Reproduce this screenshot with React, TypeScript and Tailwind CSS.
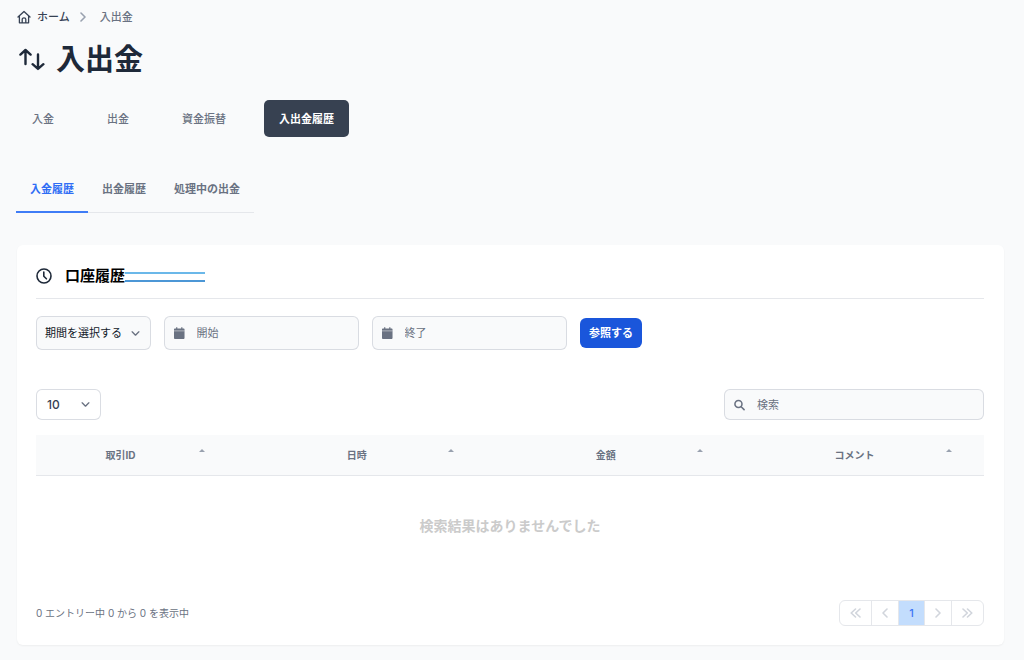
import { useState } from "react";
import type { ReactNode } from "react";

const tabs = ["入金", "出金", "資金振替", "入出金履歴"];
const historyTabs = ["入金履歴", "出金履歴", "処理中の出金"];
const columns = ["取引ID", "日時", "金額", "コメント"];

function HomeIcon() {
  return (
    <svg className="size-[14px]" viewBox="0 0 14 14" fill="none" stroke="currentColor" strokeWidth="1.3" strokeLinejoin="round" strokeLinecap="round" aria-hidden="true">
      <path d="M1 7 7 1.400l6 5.600M2.400 5.900v6.900h9.200V5.900M5.200 12.600V9.300c0-1 .8-1.500 1.800-1.500s1.800.5 1.800 1.500v3.300" />
    </svg>
  );
}

function TransferIcon() {
  return (
    <svg className="h-6 w-[26px]" viewBox="0 0 26 24" fill="none" stroke="currentColor" strokeWidth="2.4" strokeLinecap="round" strokeLinejoin="round" aria-hidden="true">
      <path d="M6.500 16V2M1.400 6.600 6.500 2l5.100 4.600M19 6.500v14.300M13.600 16.200l5.400 4.700 5.400-4.700" />
    </svg>
  );
}

function ClockIcon() {
  return (
    <svg className="size-4" viewBox="0 0 16 16" fill="none" stroke="currentColor" strokeWidth="1.6" strokeLinecap="round" strokeLinejoin="round" aria-hidden="true">
      <circle cx="8" cy="8" r="7" />
      <path d="M7.800 4v4.200l2.600 2.600" />
    </svg>
  );
}

function CalendarIcon() {
  return (
    <svg className="h-[14px] w-3" viewBox="0 0 12 14" fill="currentColor" aria-hidden="true">
      <path d="M2.400.4h1.400v1.400h4.400V.4h1.400v1.400h1.200c.7 0 1.200.5 1.200 1.100v1.300H0V2.900c0-.6.5-1.100 1.200-1.100h1.200z" />
      <path d="M0 5h12v7.600c0 .6-.5 1.100-1.200 1.100H1.200c-.7 0-1.200-.5-1.200-1.100z" />
      <path d="M0 4h12v1.200H0z" opacity=".6" />
    </svg>
  );
}

function SearchIcon() {
  return (
    <svg className="size-3" viewBox="0 0 12 12" fill="none" stroke="currentColor" strokeWidth="1.7" strokeLinecap="round" aria-hidden="true">
      <circle cx="4.900" cy="4.900" r="3.900" />
      <path d="m7.900 7.900 3.200 3.200" />
    </svg>
  );
}

function Chevron({ className, d = "m1 1 4 4 4-4", box = "0 0 10 6" }: { className: string; d?: string; box?: string }) {
  return (
    <svg className={className} viewBox={box} fill="none" stroke="currentColor" strokeWidth="1.6" strokeLinecap="round" strokeLinejoin="round" aria-hidden="true">
      <path d={d} />
    </svg>
  );
}

function Field({ label, icon, className, height }: { label: string; icon: ReactNode; className: string; height: string }) {
  return (
    <label className={`flex items-center gap-3 rounded-md border border-gray-300/80 bg-gray-50 pl-[9px] text-gray-500 ${height} ${className}`}>
      {icon}
      <input type="text" aria-label={label} placeholder={label} className="w-full min-w-0 bg-transparent text-[11px] outline-none placeholder:text-gray-500" />
    </label>
  );
}

function PageButton({ label, className, children }: { label: string; className: string; children: ReactNode }) {
  return (
    <button type="button" aria-label={label} className={`flex h-full items-center justify-center text-gray-300 ${className}`}>
      {children}
    </button>
  );
}

export default function App() {
  const [tab, setTab] = useState(3);
  const [historyTab, setHistoryTab] = useState(0);

  return (
    <div className="min-h-screen bg-gray-50 pt-2 pr-5 pb-[15px] pl-[17px] font-[Inter,'Noto_Sans_CJK_JP',sans-serif] text-[11px] leading-4 text-gray-500">
      <nav aria-label="パンくずリスト" className="flex h-[18px] items-center font-medium">
        <a href="#" className="flex items-center gap-[6px] text-gray-700">
          <HomeIcon />
          <span>ホーム</span>
        </a>
        <Chevron className="mr-[14px] ml-[10px] h-[10px] w-[6px] text-gray-400" d="m1 1 4 4-4 4" box="0 0 6 10" />
        <span>入出金</span>
      </nav>

      <h1 className="mt-[14px] flex h-10 items-center gap-[11px] pl-[2px] text-[29px] font-bold text-gray-800">
        <TransferIcon />
        入出金
      </h1>

      <div className="mt-5 flex gap-[23px]">
        {tabs.map((name, i) => (
          <button
            key={name}
            type="button"
            onClick={() => setTab(i)}
            className={`h-[37px] rounded-[5px] px-[15px] ${i === tab ? "bg-[#374151] font-bold text-white" : "font-medium"}`}
          >
            {name}
          </button>
        ))}
      </div>

      <div className="mt-[29px] flex">
        <div className="-ml-px flex border-b border-gray-200">
          {historyTabs.map((name, i) => (
            <button
              key={name}
              type="button"
              onClick={() => setHistoryTab(i)}
              className={`-mb-px h-[47px] border-b-2 px-[14px] ${i === historyTab ? "border-[#3f7cf6] font-bold text-[#2f6df5]" : "border-transparent font-bold"}`}
            >
              {name}
            </button>
          ))}
        </div>
      </div>

      <section className="mt-8 rounded-md bg-white pt-[14px] pr-5 pb-[19px] pl-[19px] shadow-xs">
        <div className="flex h-10 items-center border-b border-gray-200 pb-[6px] text-black">
          <span className="text-gray-800">
            <ClockIcon />
          </span>
          <h2 className="ml-[13px] text-[15px] font-bold">口座履歴</h2>
          <span className="mt-[3px] h-[10px] w-20 border-y-2 border-t-[#6bb8e9] border-b-[#4c97d6]" />
        </div>

        <form className="mt-[17px] flex items-center gap-[13px]" onSubmit={(e) => e.preventDefault()}>
          <div className="relative">
            <select aria-label="期間" className="h-[34px] w-[115px] appearance-none rounded-md border border-gray-300/80 bg-gray-50 pl-2 text-[11px] text-gray-900 outline-none">
              <option>期間を選択する</option>
            </select>
            <Chevron className="pointer-events-none absolute top-[15px] right-[11px] h-[5px] w-[9px] text-gray-500" />
          </div>
          <Field label="開始" icon={<CalendarIcon />} height="h-[34px]" className="w-[195px]" />
          <Field label="終了" icon={<CalendarIcon />} height="h-[34px]" className="w-[195px]" />
          <button type="submit" className="h-[30px] rounded-md bg-[#1a56db] px-[9px] font-bold text-white">
            参照する
          </button>
        </form>

        <div className="mt-[39px] flex items-center justify-between">
          <div className="relative">
            <select aria-label="表示件数" className="h-[31px] w-[65px] appearance-none rounded-md border border-gray-300/80 bg-white pl-[10px] text-[12px] font-medium text-gray-700 outline-none">
              <option>10</option>
              <option>25</option>
              <option>50</option>
            </select>
            <Chevron className="pointer-events-none absolute top-[13px] right-[11px] h-[5px] w-[9px] text-gray-500" />
          </div>
          <Field label="検索" icon={<SearchIcon />} height="h-[31px]" className="w-[260px]" />
        </div>

        <table className="mt-[15px] w-full table-fixed">
          <colgroup>
            <col className="w-[26.25%]" />
            <col className="w-[26.25%]" />
            <col className="w-[26.25%]" />
            <col />
          </colgroup>
          <thead>
            <tr className="h-10 border-b border-gray-200 bg-gray-50">
              {columns.map((name, i) => (
                <th key={name} scope="col" className="p-0 text-[10px] font-bold text-gray-500">
                  <button type="button" className="flex w-[169px] items-center">
                    <span className={`flex-1 text-center ${i === 0 ? "pl-[6px]" : "pr-[19px]"}`}>{name}</span>
                    <span className="mb-2 border-x-3 border-b-3 border-x-transparent border-b-gray-400" />
                  </button>
                </th>
              ))}
            </tr>
          </thead>
          <tbody>
            <tr>
              <td colSpan={4} className="h-[102px] p-0 text-center text-[14px] font-bold text-[#cbcbcb]">
                検索結果はありませんでした
              </td>
            </tr>
          </tbody>
        </table>

        <div className="mt-[23px] flex items-center justify-between">
          <p className="text-[10px]">0 エントリー中 0 から 0 を表示中</p>
          <nav aria-label="ページ" className="flex h-[26px] divide-x divide-gray-200 overflow-hidden rounded-md border border-gray-200">
            <PageButton label="最初のページ" className="w-8">
              <Chevron className="h-[10px] w-[11px]" d="M5.500 1 1.200 5l4.300 4M10 1 5.700 5 10 9" box="0 0 11 10" />
            </PageButton>
            <PageButton label="前のページ" className="w-[27px]">
              <Chevron className="h-[10px] w-[6px]" d="M5 1 1 5l4 4" box="0 0 6 10" />
            </PageButton>
            <button type="button" aria-current="page" className="w-[26px] bg-[#c3ddfd] font-medium text-[#3b74f6]">
              1
            </button>
            <PageButton label="次のページ" className="w-[27px]">
              <Chevron className="h-[10px] w-[6px]" d="m1 1 4 4-4 4" box="0 0 6 10" />
            </PageButton>
            <PageButton label="最後のページ" className="w-[31px]">
              <Chevron className="h-[10px] w-[11px]" d="m1 1 4.300 4L1 9M5.500 1l4.300 4-4.300 4" box="0 0 11 10" />
            </PageButton>
          </nav>
        </div>
      </section>
    </div>
  );
}
